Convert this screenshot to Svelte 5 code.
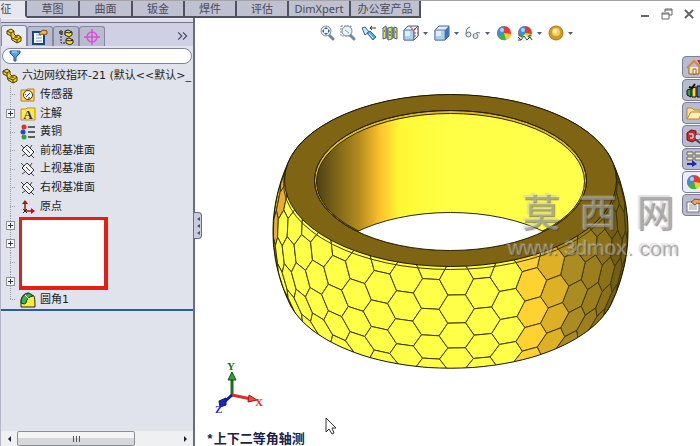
<script>
  const tabs = [
    { label: "征", w: 27, active: true },
    { label: "草图", w: 53 },
    { label: "曲面", w: 53 },
    { label: "钣金", w: 52 },
    { label: "焊件", w: 52 },
    { label: "评估", w: 52 },
    { label: "DimXpert", w: 62 },
    { label: "办公室产品", w: 70 },
  ];
  const panes = ["part", "props", "config", "target"];
  const tree = [
    { label: "传感器", icon: "sensor" },
    { label: "注解", icon: "note", plus: true },
    { label: "黄铜", icon: "material" },
    { label: "前视基准面", icon: "plane" },
    { label: "上视基准面", icon: "plane" },
    { label: "右视基准面", icon: "plane" },
    { label: "原点", icon: "origin" },
    { plus: true },
    { plus: true },
    {},
    { plus: true },
    { label: "圆角1", icon: "fillet" },
  ];
  const tools = [
    { id: "fit", name: "整屏显示全图" },
    { id: "area", name: "局部放大" },
    { id: "prev", name: "上一视图" },
    { id: "section", name: "剖面视图" },
    { id: "orient", name: "视图定向", drop: true },
    { id: "style", name: "显示样式", drop: true },
    { id: "glasses", name: "隐藏/显示项目", drop: true },
    { id: "ball", name: "编辑外观" },
    { id: "scene", name: "应用布景", drop: true },
    { id: "gold", name: "视图设定", drop: true },
  ];
  const tasks = ["home", "library", "folder", "search", "palette", "ball", "custom"];

  // Ring geometry: a barrel seen from above, t runs down its axis.
  const CX = 180.5;
  const CY = 89.5;
  const K = 0.5165;
  const COS = 0.857;
  const LEN = 102;
  const STEP = 360 / 42;
  const rad = (d) => (d * Math.PI) / 180;
  const radius = (t) => 166 + 11.5 * (1 - ((t - 51) / 51) ** 2);

  function project(deg, t) {
    const r = radius(t);
    const x = CX + r * Math.sin(rad(deg));
    const y = CY + t + K * r * Math.cos(rad(deg));
    return `${x.toFixed(1)},${y.toFixed(1)}`;
  }

  function visible(deg, t) {
    const slope = Math.atan(((51 - t) / 51) * 0.387);
    return Math.cos(slope) * Math.cos(rad(deg)) * COS + Math.sin(slope) * K > -0.12;
  }

  function shade(deg) {
    if (deg < -77) return "#e9ae2c";
    if (deg < 23) return "#ffff48";
    if (deg < 31) return "#ffd131";
    if (deg < 40) return "#deb026";
    if (deg < 49) return "#ab8c22";
    if (deg < 58) return "#9c7f1c";
    if (deg < 66) return "#8c7118";
    return "#755d12";
  }

  function buildCells() {
    const cells = [];
    for (let n = -13; n <= 12; n++) {
      const a = 2 + n * STEP;
      const start = n % 2 === 0 ? -15.25 : -2;
      for (let t = start; t < LEN + 20; t += 26.5) {
        if (!visible(a, t)) continue;
        const e = STEP / 3;
        cells.push({
          a,
          fill: shade(a),
          points: [
            project(a - e, t - 13.25),
            project(a + e, t - 13.25),
            project(a + 2 * e, t),
            project(a + e, t + 13.25),
            project(a - e, t + 13.25),
            project(a - 2 * e, t),
          ].join(" "),
        });
      }
    }
    return cells.sort((p, q) => Math.abs(q.a) - Math.abs(p.a));
  }

  // Silhouette: the outermost point of all cross sections in each direction.
  function buildHull() {
    const pts = [];
    for (let d = 0; d < 360; d += 2) {
      const c = Math.cos(rad(d));
      const s = Math.sin(rad(d));
      let best = -Infinity;
      let pt = "";
      for (let t = 0; t <= LEN; t += 2) {
        const r = radius(t);
        const norm = Math.hypot(r * c, r * K * s);
        const value = norm + t * s;
        if (value > best) {
          best = value;
          pt = `${(CX + (r * r * c) / norm).toFixed(1)},${(CY + t + (r * r * K * K * s) / norm).toFixed(1)}`;
        }
      }
      pts.push(pt);
    }
    return pts.join(" ");
  }

  const cells = buildCells();
  const hull = buildHull();

  let filter = $state("");
  let pane = $state("part");
</script>

{#snippet icon(id)}
  <svg class="icon" viewBox="0 0 16 16" aria-hidden="true">
    {#if id === "part"}
      <path d="M1 3l4-2 3 2v3l2 2 2-1 3 2v4l-4 2-5-3-1-4-4-2z" fill="#f4cf1d" stroke="#4a3a06" />
      <path d="M1 3l4 2v3M5 5l3-2M6 10l5 2v3M11 12l4-3" fill="none" stroke="#4a3a06" />
      <ellipse cx="10" cy="9" rx="2" ry="1" fill="#7a6210" />
    {:else if id === "props"}
      <path d="M1 3h11v12H1z" fill="#fff" stroke="#16447e" stroke-width="2" />
      <path d="M4 6h5M4 9h6M4 12h6" stroke="#5c9bd6" />
      <path d="M7 4l4-3 4 1v3l-3 1-2-1-2 1z" fill="#f0b24b" stroke="#7c4b12" />
    {:else if id === "config"}
      <path d="M3 1v13h5M3 5h4" fill="none" stroke="#222" stroke-dasharray="2 1" />
      <path d="M1 2h4v3H1z" fill="#555" />
      <path d="M7 2l3-1 4 2v3l-3 2-4-2zM8 10l3-1 4 2v3l-3 2-4-2z" fill="#f2df2b" stroke="#222" />
      <path d="M7 3l4 1 3-1M8 11l4 1 3-1" fill="none" stroke="#222" />
    {:else if id === "target"}
      <circle cx="8" cy="8" r="5" fill="none" stroke="#d850d8" stroke-width="1.5" />
      <path d="M8 0v16M0 8h16" stroke="#d850d8" stroke-width="1.5" />
    {:else if id === "sensor"}
      <path d="M1 3h5l1-1h7v12H1z" fill="#ffd95a" stroke="#bd7c12" />
      <circle cx="8" cy="8" r="4.5" fill="#fff" stroke="#333" />
      <path d="M6 10l4-4M5 7l1 1M8 11h2" stroke="#333" />
    {:else if id === "note"}
      <path d="M1 3h5l1-1h8v12H1z" fill="#ffec42" stroke="#c98a12" />
      <text x="8" y="13" text-anchor="middle" class="glyph">A</text>
    {:else if id === "material"}
      <circle cx="4" cy="3" r="2.5" fill="#e03028" />
      <circle cx="3" cy="8" r="2.5" fill="#2d3fd4" />
      <circle cx="4" cy="13" r="2.5" fill="#22a53a" />
      <path d="M8 3h7M8 8h7M8 13h7" stroke="#333" stroke-width="1.5" />
    {:else if id === "plane"}
      <path d="M7 2l7 7-5 5-7-7z" fill="#f4f6fa" stroke="#333" />
      <path d="M1 2l3 3M11 12l3 3M12 2l-2 3M2 13l3-2M6 6l4 4" fill="none" stroke="#444" />
    {:else if id === "origin"}
      <path d="M5 3v9h7" fill="none" stroke="#a51212" stroke-width="1.5" />
      <path d="M2 5l3-4 3 4zM11 9l4 3-4 3z" fill="#b01414" />
      <path d="M3 10l4 4M7 10l-4 4" stroke="#222" />
    {:else if id === "fillet"}
      <path d="M1 15V8q1-6 7-7l6 3q1 2 1 11H7z" fill="#ffe93c" stroke="#222" />
      <path d="M1 11q0-9 8-10l4 3Q7 5 6 11q-1 2-5 0z" fill="#38b248" stroke="#173f18" />
      <path d="M5 3l4 4" stroke="#fff" />
    {:else if id === "fit" || id === "area"}
      {#if id === "area"}
        <path d="M1 1h10v10H1z" fill="none" stroke="#888" stroke-dasharray="2 1" />
      {/if}
      <path d="M10 10l4 4" stroke="#6d87a5" stroke-width="3" stroke-linecap="round" />
      <circle cx="7" cy="6" r="5" fill="#e9f3fa" stroke="#7f8f9f" />
      {#if id === "fit"}
        <path d="M7 2l2 2H5zM7 10l2-2H5zM3 6l2-2v4zM11 6L9 4v4z" fill="#3b5f86" />
      {:else}
        <path d="M5 5l4 3" stroke="#7f98b3" />
      {/if}
    {:else if id === "prev"}
      <path d="M1 3l3-1 4 5-4 3z" fill="#c9e4f8" stroke="#2e659c" />
      <path d="M6 8l3-2 6 6-3 3z" fill="#5aa8ea" stroke="#2e659c" />
      <path d="M8 9l4 4" stroke="#d6edff" />
      <path d="M9 3h6M11 1L9 3l2 2" fill="none" stroke="#333" />
    {:else if id === "section"}
      <path d="M1 3l3-2v12l-3 1zM6 3l4-1v12l-4 1zM12 2l3 1v11l-3-1z" fill="#f3dc3c" stroke="#49659c" />
      <path d="M4 2l2 1v12l-2-2zM10 2l2 1v10l-2 1z" fill="#4b82c9" />
      <path d="M2 6h1M7 7h2M7 10h2M13 7h1" stroke="#333" />
    {:else if id === "orient" || id === "style"}
      <path d="M1 5l4-4h10v10l-4 4H1z" fill="#e0eefb" stroke="#4a6287" />
      <path d="M1 5h10v10H1z" fill="#a9cff2" stroke="#6a87ad" />
      <path d="M2 6h5v5H2z" fill="#dfeffc" />
      {#if id === "orient"}
        <path d="M11 5l4-4v10l-4 4z" fill="#fff" stroke="#7a5060" />
        <path d="M8 1v3h7M11 8h4M11 11h3" fill="none" stroke="#b33" stroke-dasharray="2 1" />
      {:else}
        <path d="M11 5l4-4v10l-4 4z" fill="#3e73bd" />
      {/if}
    {:else if id === "glasses"}
      <path d="M1 9q0-6 4-7M9 10q3-4 6-2" fill="none" stroke="#66737e" />
      <circle cx="3.5" cy="9.500" r="2.500" fill="#e1e9ef" stroke="#66737e" />
      <circle cx="10.500" cy="11" r="2.500" fill="#e1e9ef" stroke="#66737e" />
    {:else if id === "ball" || id === "scene"}
      <circle cx="8" cy="8" r="7" fill="#e23b31" />
      <path d="M8 8L8 1a7 7 0 0 0-6 10z" fill="#3f8ee0" />
      <path d="M8 8L2 11a7 7 0 0 0 8 4z" fill="#35b648" />
      <path d="M8 8l2 7a7 7 0 0 0 5-6z" fill="#f7cc32" />
      <circle cx="6" cy="5" r="2" fill="#fff" opacity=".6" />
      {#if id === "scene"}
        <path d="M0 16l2-6 3 2 3-3 3 3 3-2 2 6z" fill="#f2f2ee" />
        <path d="M1 12l3 3 3-4 3 4 3-3 2 3M1 15h3" fill="none" stroke="#3a4a3a" />
        <path d="M2 10l3 2M11 12l3-2" stroke="#2f9a3c" stroke-width="2" />
      {/if}
    {:else if id === "gold"}
      <circle cx="8" cy="8" r="7" fill="#d69a24" stroke="#a9721b" />
      <circle cx="8" cy="7" r="4" fill="#f4cf62" />
      <circle cx="7" cy="6" r="2" fill="#fff2c2" />
    {:else if id === "home"}
      <path d="M3 8v7h10V8" fill="#ffe6a8" stroke="#a15d16" />
      <path d="M1 9l7-7 7 7" fill="none" stroke="#d88a26" stroke-width="2" />
      <path d="M11 1h3v5z" fill="#c22" />
      <path d="M7 10h3v5H7z" fill="#fff" stroke="#a15d16" />
    {:else if id === "library"}
      <path d="M1 8l4-1v8l-4-2z" fill="#2ba338" stroke="#111" />
      <path d="M6 6l4-1v10H6z" fill="#f3de2b" stroke="#111" />
      <path d="M11 4h4v11h-4z" fill="#4c6fe0" stroke="#111" />
      <path d="M3 5l3 1 3-4" fill="none" stroke="#111" stroke-width="2" />
    {:else if id === "folder"}
      <path d="M1 14V3h5l2 2h6v3" fill="#ffe38c" stroke="#b9862a" />
      <path d="M1 14l4-7h11l-3 7z" fill="#fff0b0" stroke="#b9862a" />
    {:else if id === "search"}
      <path d="M1 5l4-3 5 1v9l-4 2-5-2z" fill="#c92a32" stroke="#6e1218" />
      <path d="M3 6h4v4H4" fill="none" stroke="#fff" />
      <circle cx="12" cy="9" r="3" fill="#b4def5" stroke="#4a5d70" />
      <path d="M10 12l4 3" stroke="#444" stroke-width="2" />
    {:else if id === "palette"}
      <path d="M1 1h6v3H1zM9 1h6v3H9zM1 6h6v3H1zM9 6h6v3H9z" fill="#f6f0a8" stroke="#667" />
      <path d="M1 12h5V9l5 4-5 3v-2H1z" fill="#2026b4" />
    {:else if id === "custom"}
      <path d="M1 5h12v10H1z" fill="#fff" stroke="#777" />
      <path d="M3 8h8M3 10h8M3 12h8" stroke="#99a" />
      <path d="M5 5l4-3 6 1v4l-4-1-2 2z" fill="#e9a565" stroke="#8a4e1c" />
    {/if}
  </svg>
{/snippet}

<div class="app">
  <nav class="tabs">
    {#each tabs as tab (tab.label)}
      <button class="tab" class:active={tab.active} style:width="{tab.w}px">{tab.label}</button>
    {/each}
  </nav>

  <div class="body">
    <aside class="side">
      <div class="panes">
        {#each panes as id (id)}
          <button class="pane" class:current={pane === id} aria-label={id} onclick={() => (pane = id)}>
            {@render icon(id)}
          </button>
        {/each}
        <button class="more" aria-label="更多">
          <svg viewBox="0 0 10 8"><path d="M1 1l3 3-3 3M5 1l3 3-3 3" fill="none" stroke="#44486a" /></svg>
        </button>
      </div>

      <label class="filter">
        <svg viewBox="0 0 12 12" aria-hidden="true">
          <path d="M1 1h10v2L7 7v4H5V7L1 3z" fill="#4aa3ee" stroke="#1b56a5" />
          <path d="M3 2h5" stroke="#d3ecff" />
        </svg>
        <input type="text" aria-label="过滤" bind:value={filter} />
      </label>

      <div class="tree">
        <div class="row root">
          {@render icon("part")}
          <span>六边网纹指环-21 (默认&lt;&lt;默认&gt;_</span>
        </div>
        {#each tree as item, i (i)}
          <div class="row" class:last={i === tree.length - 1}>
            <span class="branch">
              {#if item.plus}<button class="plus" aria-label="展开"></button>{/if}
            </span>
            {#if item.icon}{@render icon(item.icon)}{/if}
            {#if item.label}<span>{item.label}</span>{/if}
          </div>
        {/each}
        <div class="mask"></div>
      </div>
      <div class="rollback"></div>

      <div class="scroll">
        <button class="arrow" aria-label="向左">
          <svg viewBox="0 0 5 8"><path d="M4 1v6L1 4z" fill="#222" /></svg>
        </button>
        <div class="track"><div class="thumb"><i></i><i></i><i></i></div></div>
        <button class="arrow" aria-label="向右">
          <svg viewBox="0 0 5 8"><path d="M1 1v6l3-3z" fill="#222" /></svg>
        </button>
      </div>
    </aside>

    <main class="view">
      <button class="handle" aria-label="折叠">
        <svg viewBox="0 0 4 20"><path d="M4 1v4L1 3zM4 8v4l-3-2zM4 15v4l-3-2z" fill="#4a4e74" /></svg>
      </button>

      <div class="top">
        <div class="tools">
          {#each tools as tool (tool.id)}
            <button class="tool" class:drop={tool.drop} aria-label={tool.name}>
              {@render icon(tool.id)}
              {#if tool.drop}
                <svg class="caret" viewBox="0 0 5 3"><path d="M0 0h5L2.500 3z" fill="#555a78" /></svg>
              {/if}
            </button>
          {/each}
        </div>
        <div class="window">
          <button aria-label="最小化">
            <svg viewBox="0 0 12 12"><path d="M2 8h8" stroke="#666" stroke-width="2" /></svg>
          </button>
          <button aria-label="还原">
            <svg viewBox="0 0 12 12">
              <path d="M4 4V1h7v6H8M4 2h7" fill="none" stroke="#666" />
              <path d="M1 5h7v6H1zM1 6h7" fill="none" stroke="#666" />
            </svg>
          </button>
          <button aria-label="关闭">
            <svg viewBox="0 0 12 12"><path d="M2 2l8 8M10 2l-8 8" stroke="#666" stroke-width="2" /></svg>
          </button>
        </div>
      </div>

      <svg class="ring" viewBox="0 0 360 282" role="img" aria-label="六边网纹指环">
        <defs>
          <clipPath id="body-clip"><polygon points={hull} /></clipPath>
          <clipPath id="bore-clip"><ellipse cx={CX} cy={CY} rx="136" ry="70" /></clipPath>
          <linearGradient id="bore" gradientUnits="userSpaceOnUse" x1="46" y1="0" x2="316" y2="0">
            <stop offset="0" stop-color="#4e3f14" />
            <stop offset=".08" stop-color="#806717" />
            <stop offset=".16" stop-color="#b48b1c" />
            <stop offset=".24" stop-color="#ffc42c" />
            <stop offset=".31" stop-color="#fff934" />
            <stop offset=".5" stop-color="#ffff46" />
            <stop offset="1" stop-color="#ffff4c" />
          </linearGradient>
        </defs>

        <polygon points={hull} fill="#6b5611" />
        <g clip-path="url(#body-clip)">
          {#each cells as cell}
            <polygon points={cell.points} fill={cell.fill} stroke="#3d3a08" />
          {/each}
          <ellipse cx={CX} cy={CY + 3} rx="167" ry="86" fill="none" stroke="#3d3a08" />
        </g>
        <polygon points={hull} fill="none" stroke="#1d1a04" />

        <ellipse cx={CX} cy={CY} rx="166" ry="86" fill="#7f6414" stroke="#1d1a04" />
        <ellipse cx={CX} cy={CY} rx="136" ry="70" fill="#e0bb30" stroke="#2b2406" />
        <g clip-path="url(#bore-clip)">
          <ellipse cx={CX} cy={CY + 1} rx="134" ry="68" fill="url(#bore)" stroke="#2b2406" />
          <ellipse cx={CX} cy={CY + LEN} rx="136" ry="70" fill="#fff" stroke="#2b2406" />
        </g>
        <ellipse cx={CX} cy={CY} rx="136" ry="70" fill="none" stroke="#2b2406" />
      </svg>

      <div class="watermark">
        <div class="brand"><span>莫</span><span>西</span><span>网</span></div>
        <div class="site">www. 3dmox. com</div>
      </div>

      <svg class="triad" viewBox="0 0 54 54" role="img" aria-label="坐标系">
        <path d="M19 35V17" stroke="#17721f" stroke-width="3" />
        <path d="M15 20l4-8 4 8z" fill="#2fa03a" stroke="#124f18" />
        <path d="M19 35l19 4" stroke="#e02a22" stroke-width="3" />
        <path d="M36 35l8 5-9 2z" fill="#ee4a3e" stroke="#a81510" />
        <path d="M19 35l-9 8" stroke="#141c9c" stroke-width="3" />
        <path d="M13 38l-7 3 1 6 6-2z" fill="#1a28c8" stroke="#0c1280" />
        <text x="14" y="10" fill="#17721f">Y</text>
        <text x="42" y="46" fill="#e02a22">X</text>
        <text x="2" y="53" fill="#1a28c8">Z</text>
      </svg>
      <div class="caption">*上下二等角轴测</div>
      <svg class="cursor" viewBox="0 0 12 18" aria-hidden="true">
        <path d="M1 1v14l3-3 3 5 2-1-2-5h4z" fill="#fff" stroke="#333" />
      </svg>

      <div class="tasks">
        {#each tasks as id (id)}
          <button class="task" class:lit={id === "ball"} aria-label={id}>{@render icon(id)}</button>
        {/each}
      </div>
    </main>
  </div>
</div>

<style>
  :global(body) {
    background: #fff;
    overflow: hidden;
  }
  .app {
    height: 100vh;
    display: flex;
    flex-direction: column;
    font-family: "Noto Sans", "Noto Sans CJK SC", sans-serif;
    font-size: 11px;
    color: #1c1c24;
  }
  button {
    margin: 0;
    padding: 0;
    border: none;
    background: transparent;
    font: inherit;
    color: inherit;
  }
  .icon {
    display: block;
    width: 16px;
    height: 16px;
    flex: none;
  }
  .glyph {
    font-family: "Liberation Serif", serif;
    font-size: 13px;
    font-weight: bold;
    fill: #1b2b8c;
  }

  .tabs {
    display: flex;
    height: 18px;
    flex: none;
    border-top: 1px solid #a3a3a8;
    box-sizing: border-box;
  }
  .tab {
    flex: none;
    box-sizing: border-box;
    border-right: 2px solid #50525f;
    border-bottom: 2px solid #50525f;
    background: #bfc0d0;
    color: #4a4b58;
    line-height: 15px;
    white-space: nowrap;
  }
  .tab.active {
    background: #e6e7f0;
    border-bottom-color: #e6e7f0;
    padding-right: 13px;
  }

  .body {
    display: flex;
    flex: 1;
    min-height: 0;
  }
  .side {
    width: 195px;
    flex: none;
    box-sizing: border-box;
    display: flex;
    flex-direction: column;
    background: #e0e3ec;
    border-left: 1px solid #b5b7c6;
    border-right: 2px solid #6a6b86;
  }
  .panes {
    display: flex;
    align-items: flex-end;
    height: 28px;
    flex: none;
    box-sizing: border-box;
    border-top: 1px solid #f0f0f8;
    background: #cfd0e4;
    box-shadow: inset 0 3px 0 #dcdde8, inset 0 4px 0 #74758c;
  }
  .pane {
    display: flex;
    align-items: center;
    justify-content: center;
    box-sizing: border-box;
    width: 26px;
    height: 20px;
    border: 1px solid #8587a0;
    border-bottom: none;
    border-radius: 3px 3px 0 0;
    background: #b9bbce;
  }
  .pane.current {
    height: 21px;
    background: #e8eaf2;
  }
  .more {
    width: 16px;
    height: 20px;
    margin-left: auto;
  }
  .more svg {
    display: block;
    width: 12px;
    height: 10px;
  }
  .filter {
    display: flex;
    align-items: center;
    gap: 4px;
    height: 16px;
    box-sizing: border-box;
    margin: 2px 1px 3px 1px;
    padding-left: 6px;
    border: 1px solid #8083a0;
    border-radius: 8px;
    background: #fff;
  }
  .filter svg {
    width: 12px;
    height: 12px;
    flex: none;
  }
  .filter input {
    flex: 1;
    min-width: 0;
    height: 12px;
    padding: 0;
    border: none;
    outline: none;
    background: transparent;
    font: inherit;
  }

  .tree {
    position: relative;
    display: flex;
    flex-direction: column;
    height: 242px;
    flex: none;
    font-family: "DejaVu Sans", "Noto Sans CJK SC", sans-serif;
  }
  .row {
    position: relative;
    display: flex;
    align-items: center;
    gap: 4px;
    flex: 1;
    min-height: 0;
    line-height: 16px;
    white-space: nowrap;
  }
  .root {
    padding-left: 1px;
  }
  .branch {
    display: flex;
    align-items: center;
    align-self: stretch;
    width: 15px;
    flex: none;
    background:
      repeating-linear-gradient(#9a9caa 0 1px, transparent 1px 2px) 9px 0 / 1px 100% no-repeat,
      repeating-linear-gradient(90deg, #9a9caa 0 1px, transparent 1px 2px) 9px 50% / 6px 1px no-repeat;
  }
  .last .branch {
    background:
      repeating-linear-gradient(#9a9caa 0 1px, transparent 1px 2px) 9px 0 / 1px 50% no-repeat,
      repeating-linear-gradient(90deg, #9a9caa 0 1px, transparent 1px 2px) 9px 50% / 6px 1px no-repeat;
  }
  .plus {
    box-sizing: border-box;
    width: 9px;
    height: 9px;
    margin-left: 5px;
    border: 1px solid #8e909c;
    background:
      linear-gradient(#333, #333) center / 5px 1px no-repeat,
      linear-gradient(#333, #333) center / 1px 5px no-repeat,
      #f6f7fa;
  }
  .mask {
    position: absolute;
    left: 18px;
    top: 150px;
    width: 89px;
    height: 73px;
    box-sizing: border-box;
    border: 4px solid #e71d12;
    border-width: 3px 4px 4px 3px;
    background: #fff;
  }
  .rollback {
    height: 2px;
    flex: none;
    background: #2d5c9c;
  }
  .scroll {
    display: flex;
    height: 15px;
    margin-top: auto;
    flex: none;
    background: #eff0f2;
  }
  .arrow {
    width: 16px;
    display: flex;
    align-items: center;
    justify-content: center;
  }
  .arrow svg {
    width: 5px;
    height: 8px;
  }
  .track {
    flex: 1;
    display: flex;
  }
  .thumb {
    display: flex;
    align-items: center;
    justify-content: center;
    gap: 2px;
    width: 74%;
    box-sizing: border-box;
    border: 1px solid #8c8e94;
    border-radius: 2px;
    background: linear-gradient(#f4f4f5 50%, #d6d7da 50%);
  }
  .thumb i {
    width: 1px;
    height: 6px;
    background: #555;
  }

  .view {
    position: relative;
    flex: 1;
    min-width: 0;
    background: #fff;
  }
  .top {
    display: flex;
    justify-content: space-between;
    padding: 0 5px 0 124px;
  }
  .tools {
    display: flex;
    gap: 5px;
    padding-top: 7px;
  }
  .tool {
    display: flex;
    align-items: center;
    gap: 4px;
  }
  .tool.drop {
    width: 26px;
  }
  .caret {
    width: 5px;
    height: 3px;
  }
  .window {
    display: flex;
    align-items: flex-start;
    gap: 10px;
    margin-top: -10px;
  }
  .window svg {
    display: block;
    width: 12px;
    height: 12px;
  }
  .handle {
    position: absolute;
    left: -1px;
    top: 194px;
    width: 8px;
    height: 27px;
    display: flex;
    align-items: center;
    justify-content: center;
    border: 1px solid #6a6b86;
    border-left: none;
    border-radius: 0 4px 4px 0;
    background: #c9cbe0;
  }
  .handle svg {
    width: 4px;
    height: 20px;
  }

  .ring {
    position: absolute;
    left: 75px;
    top: 73px;
    width: 360px;
    height: 282px;
  }
  .watermark {
    position: absolute;
    left: 313px;
    top: 173px;
    font-family: "Liberation Sans", "Noto Sans CJK SC", sans-serif;
    color: rgba(255, 255, 255, 0.3);
    text-shadow:
      1px 1px 1px rgba(60, 60, 60, 0.55),
      -1px -1px 1px rgba(180, 180, 180, 0.4);
    white-space: nowrap;
    pointer-events: none;
  }
  .brand {
    display: flex;
    gap: 19px;
    padding-left: 14px;
    font-size: 38px;
    font-weight: 500;
    line-height: 44px;
  }
  .site {
    font-size: 21px;
    line-height: 26px;
  }
  .triad {
    position: absolute;
    left: 18px;
    bottom: 32px;
    width: 54px;
    height: 54px;
  }
  .triad text {
    font-family: "Liberation Serif", serif;
    font-size: 11px;
    font-weight: bold;
  }
  .caption {
    position: absolute;
    left: 11px;
    bottom: 0;
    font-family: "Liberation Mono", "Noto Sans CJK SC", monospace;
    font-size: 13px;
    line-height: 13px;
    font-weight: bold;
    color: #20204c;
  }
  .cursor {
    position: absolute;
    left: 130px;
    bottom: 11px;
    width: 12px;
    height: 18px;
  }
  .tasks {
    position: absolute;
    right: 0;
    top: 38px;
    width: 18px;
    display: flex;
    flex-direction: column;
    gap: 1px;
    overflow: hidden;
  }
  .task {
    box-sizing: border-box;
    width: 24px;
    height: 22px;
    padding-left: 3px;
    border: 1px solid #7b7e9a;
    border-radius: 4px 0 0 4px;
    background: #b9bbcf;
  }
  .task.lit {
    background: #eceef6;
  }
</style>
